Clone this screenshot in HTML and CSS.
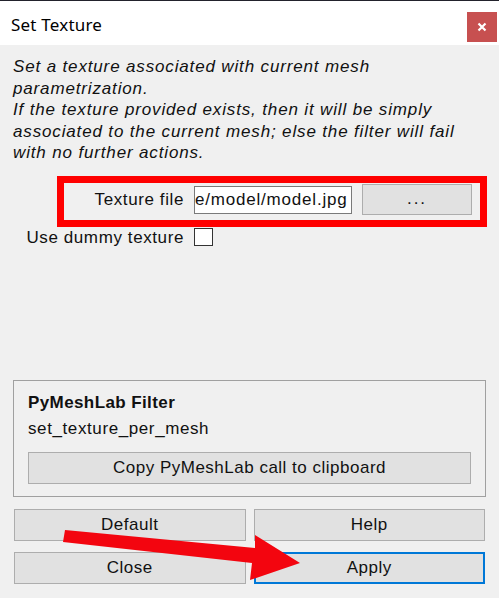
FILE: index.html
```html
<!DOCTYPE html>
<html lang="en">
<head>
  <meta charset="UTF-8">
  <meta name="viewport" content="width=device-width, initial-scale=1.0">
  <title>Set Texture</title>
  <link rel="stylesheet" href="styles.css">
</head>
<body>

  <header class="titlebar">
    <span class="title">Set Texture</span>
    <button class="close-btn" aria-label="Close">
      <svg width="10" height="10" viewBox="0 0 10 10">
        <path d="M1.5 1.5 L8.5 8.5 M8.5 1.5 L1.5 8.5" stroke="#fff" stroke-width="2.2"/>
      </svg>
    </button>
  </header>

  <main class="dialog">
    <p class="description">Set a texture associated with current mesh<br>parametrization.<br>If the texture provided exists, then it will be simply<br>associated to the current mesh; else the filter will fail<br>with no further actions.</p>

    <div class="field-row highlight">
      <label class="field-label" for="texfile">Texture file</label>
      <input type="text" id="texfile" class="text-input" value="e/model/model.jpg">
      <button class="btn browse-btn">...</button>
    </div>

    <div class="check-row">
      <label class="check-label" for="dummy">Use dummy texture</label>
      <span class="checkbox" id="dummy"></span>
    </div>

    <fieldset class="group-box">
      <div class="group-title">PyMeshLab Filter</div>
      <div class="group-text">set_texture_per_mesh</div>
      <button class="btn wide-btn">Copy PyMeshLab call to clipboard</button>
    </fieldset>

    <div class="button-grid">
      <button class="btn">Default</button>
      <button class="btn">Help</button>
      <button class="btn">Close</button>
      <button class="btn default-btn">Apply</button>
    </div>
  </main>

  <svg class="arrow" width="499" height="598" viewBox="0 0 499 598">
    <polygon points="65,530 255,548 255,535 300,563 250,580 252,563 63,542" fill="#f3050f"/>
  </svg>

</body>
</html>
```

FILE: styles.css
```css
html, body {
  height: 100%;
  margin: 0;
}

body {
  display: flex;
  flex-direction: column;
  background-color: #f0f0f0;
  font-family: "Liberation Sans", Arial, sans-serif;
  font-size: 17px;
  letter-spacing: 0.6px;
  color: #111;
  position: relative;
  overflow: hidden;
}

.titlebar {
  height: 44px;
  border-top: 1px solid #22222c;
  background-color: #fff;
  display: flex;
  align-items: center;
  justify-content: space-between;
  padding: 0 2px 0 11px;
}

.title {
  font-family: "Noto Sans", sans-serif;
  font-size: 17px;
  letter-spacing: 0.2px;
  color: #000;
  margin-top: 3px;
}

.close-btn {
  width: 30px;
  height: 30px;
  border: none;
  background-color: #c75050;
  display: flex;
  align-items: center;
  justify-content: center;
  padding: 0;
  margin-top: 8px;
}

.dialog {
  flex: 1;
  display: flex;
  flex-direction: column;
  padding: 0 13px 14px 13px;
}

.description {
  font-style: italic;
  letter-spacing: 0.85px;
  line-height: 21.6px;
  margin: 11px 0 0 0;
  white-space: nowrap;
}

.field-row {
  display: flex;
  align-items: flex-start;
  gap: 10px;
}

.highlight {
  margin: 12px 0 0 44px;
  width: 416px;
  height: 37px;
  border: 7px solid #ff0000;
}

.field-label {
  width: 120px;
  text-align: right;
  margin-top: 7px;
  flex-shrink: 0;
}

.text-input {
  width: 156px;
  height: 26px;
  margin: 3px 0 0 0;
  padding: 0;
  border: 1px solid #7a7a7a;
  background-color: #fff;
  font-family: inherit;
  font-size: 17px;
  letter-spacing: 0.8px;
  color: #111;
  overflow: hidden;
}

.btn {
  background-color: #e1e1e1;
  border: 1px solid #adadad;
  font-family: inherit;
  font-size: 17px;
  letter-spacing: 0.5px;
  color: #111;
  padding: 0;
  height: 32px;
}

.browse-btn {
  width: 110px;
  height: 31px;
  margin-top: 1px;
  letter-spacing: 2px;
}

.check-row {
  display: flex;
  align-items: center;
  gap: 10px;
  height: 19px;
  margin-top: 1px;
}

.check-label {
  width: 171px;
  text-align: right;
  margin-top: 2px;
}

.checkbox {
  width: 17px;
  height: 16px;
  border: 1px solid #333;
  background-color: #fff;
}

.group-box {
  margin: auto 0 0 0;
  padding: 11px 14px 12px 14px;
  border: 1px solid #a0a0a0;
  min-width: 0;
}

.group-title {
  font-weight: bold;
  letter-spacing: 0.4px;
  line-height: 22px;
}

.group-text {
  line-height: 22px;
  margin-top: 4px;
}

.wide-btn {
  width: 100%;
  margin-top: 12px;
}

.button-grid {
  display: grid;
  grid-template-columns: 1fr 1fr;
  gap: 11px 8px;
  margin: 12px 1px 0 1px;
}

.default-btn {
  border: 2px solid #0078d7;
}

.arrow {
  position: absolute;
  left: 0;
  top: 0;
  pointer-events: none;
}
```
